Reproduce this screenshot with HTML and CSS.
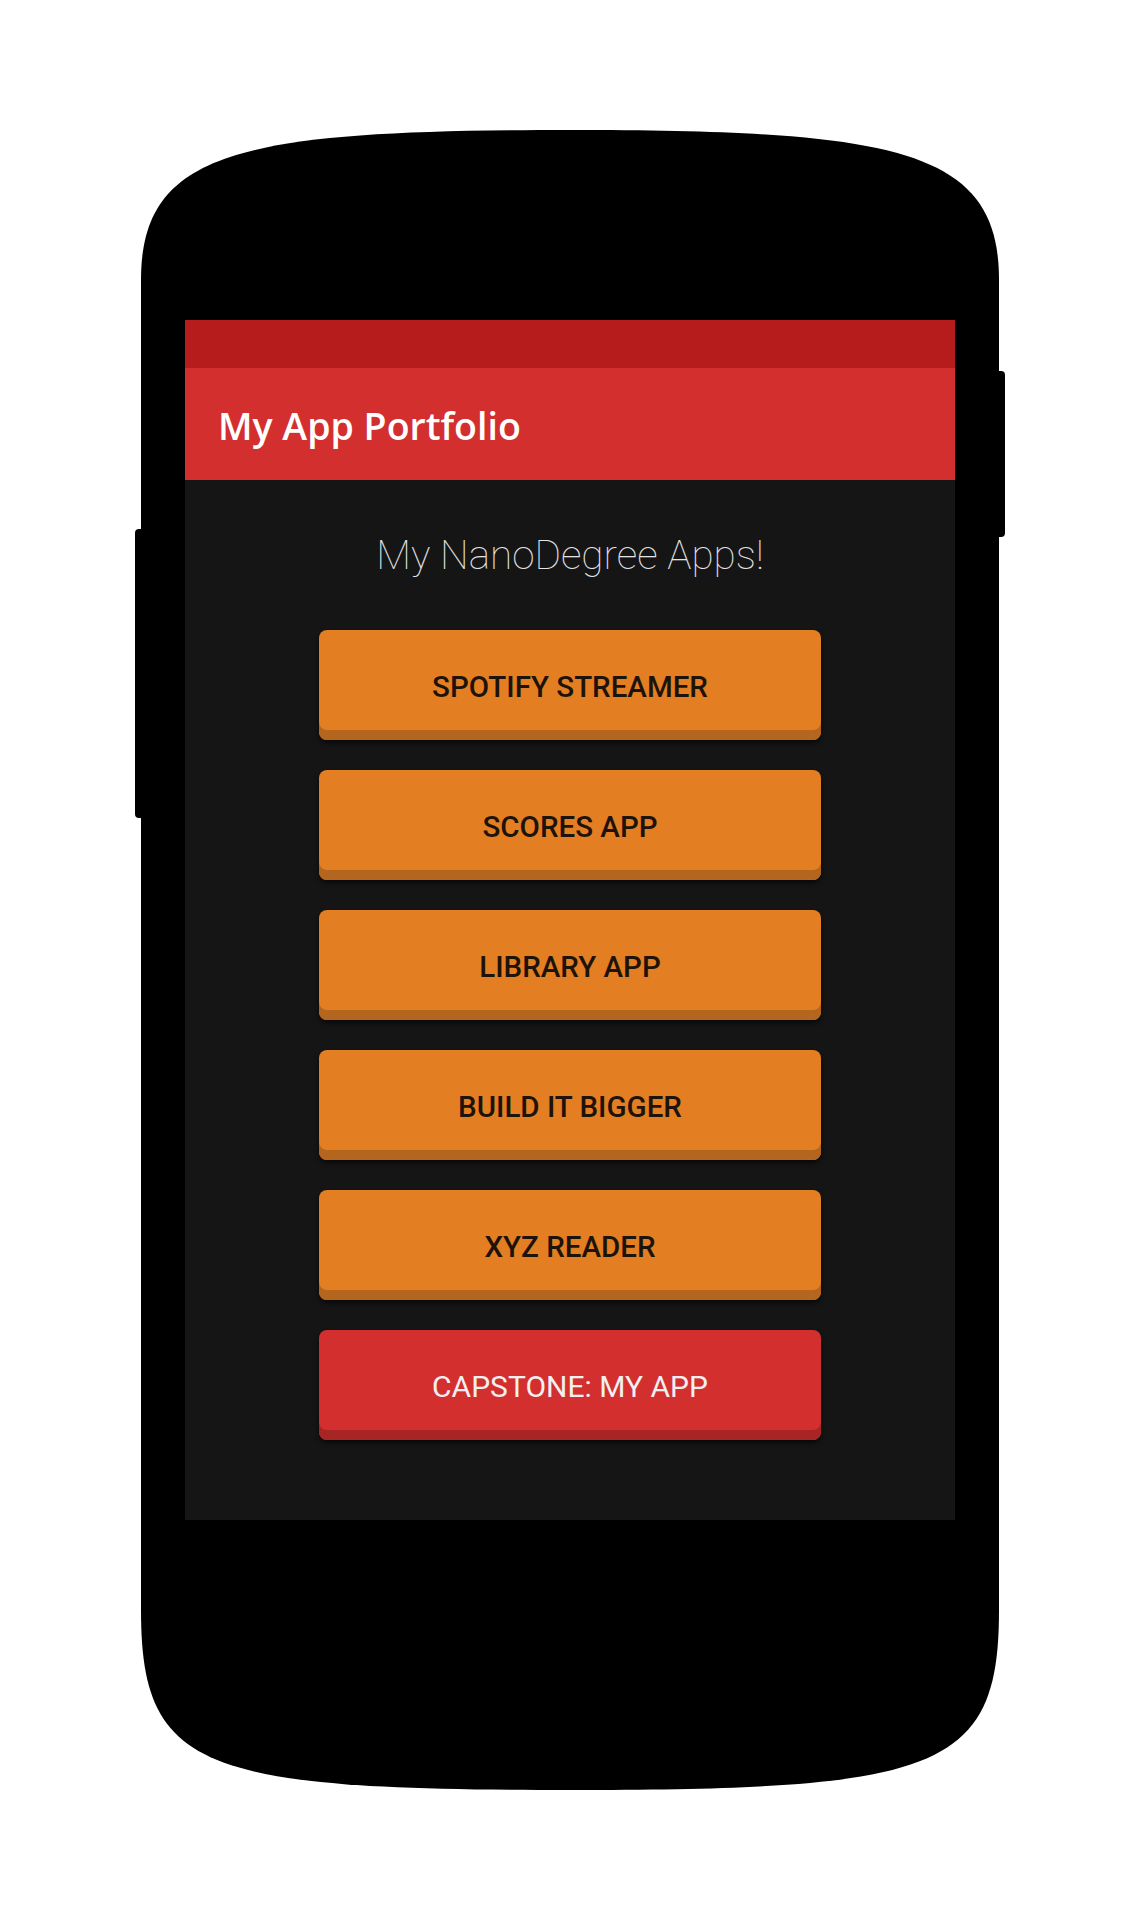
FILE: index.html
```html
<!DOCTYPE html>
<html lang="en">
<head>
<meta charset="utf-8">
<title>My App Portfolio</title>
<link rel="stylesheet" href="styles.css">
</head>
<body>
<div class="phone">
  <div class="side-btn side-left"></div>
  <div class="side-btn side-right"></div>
  <svg class="phone-body" width="858" height="1660" viewBox="0 0 858 1660" aria-hidden="true">
    <path d="M0,150 C0,20 100,0 429,0 C758,0 858,20 858,150 L858,1480 C858,1640 798,1660 429,1660 C60,1660 0,1640 0,1480 Z" fill="#000"/>
  </svg>
  <div class="screen">
    <div class="status-bar"></div>
    <div class="toolbar"><h1 class="toolbar-title">My App Portfolio</h1></div>
    <div class="content">
      <p class="subtitle">My NanoDegree Apps!</p>
      <div class="buttons">
        <button class="app-btn">SPOTIFY STREAMER</button>
        <button class="app-btn">SCORES APP</button>
        <button class="app-btn">LIBRARY APP</button>
        <button class="app-btn">BUILD IT BIGGER</button>
        <button class="app-btn">XYZ READER</button>
        <button class="app-btn app-btn-red">CAPSTONE: MY APP</button>
      </div>
    </div>
  </div>
</div>
</body>
</html>
```

FILE: styles.css
```css
html, body {
  margin: 0;
  padding: 0;
  background: #ffffff;
}

body {
  padding-top: 130px;
  font-family: Roboto, "Noto Sans", sans-serif;
}

.phone {
  position: relative;
  width: 858px;
  height: 1660px;
  margin: 0 auto;
}

.phone-body {
  position: absolute;
  left: 0;
  top: 0;
  z-index: 0;
}

.side-btn {
  position: absolute;
  background: #000;
  z-index: 0;
}

.side-left {
  left: -6px;
  top: 399px;
  width: 12px;
  height: 289px;
  border-radius: 4px 0 0 4px;
}

.side-right {
  right: -6px;
  top: 241px;
  width: 12px;
  height: 166px;
  border-radius: 0 4px 4px 0;
}

.screen {
  position: relative;
  z-index: 1;
  margin: 0 44px;
  top: 190px;
  height: 1200px;
  display: flex;
  flex-direction: column;
  background: #151515;
}

.status-bar {
  height: 48px;
  background: #b71c1c;
}

.toolbar {
  height: 112px;
  background: #d32f2f;
  display: flex;
  align-items: center;
  padding-left: 33px;
}

.toolbar-title {
  margin: 0;
  font-family: "Open Sans", "Noto Sans", sans-serif;
  font-weight: 600;
  font-size: 37.5px;
  color: #ffffff;
  position: relative;
  top: 1px;
}

.content {
  flex: 1;
  display: flex;
  flex-direction: column;
  align-items: center;
}

.subtitle {
  margin: 51px 0 0;
  font-family: Roboto, sans-serif;
  font-weight: 100;
  font-size: 40.5px;
  line-height: 48px;
  color: #e4e4e4;
}

.buttons {
  margin-top: 51px;
  display: flex;
  flex-direction: column;
  gap: 30px;
}

.app-btn {
  width: 502px;
  height: 110px;
  box-sizing: border-box;
  padding: 4px 0 0;
  border: none;
  border-radius: 8px;
  background: #e37e22;
  box-shadow: inset 0 -10px 0 #b4661f, 0 3px 4px rgba(0, 0, 0, 0.6);
  font-family: Roboto, sans-serif;
  font-weight: 500;
  font-size: 29.5px;
  line-height: 30px;
  color: #1e130a;
  text-align: center;
  display: block;
}

.app-btn-red {
  background: #d32f2f;
  box-shadow: inset 0 -10px 0 #a82525, 0 3px 4px rgba(0, 0, 0, 0.6);
  color: #f0f0f0;
  font-weight: 400;
  font-size: 30px;
}
```
